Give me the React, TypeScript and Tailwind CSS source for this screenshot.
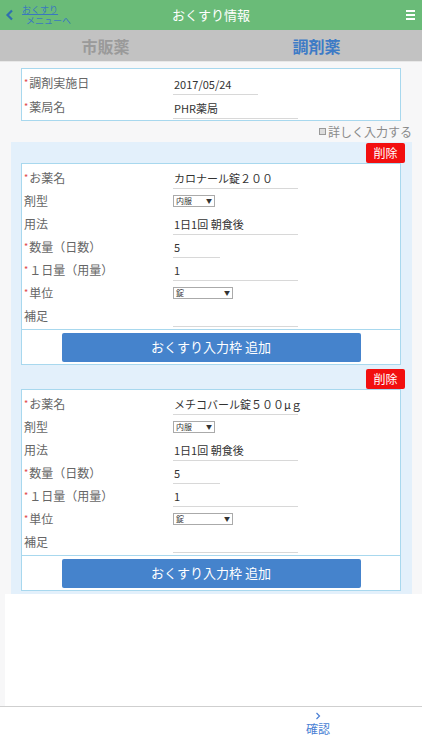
import React from "react";

const font = { fontFamily: '"Noto Sans CJK JP", "Noto Sans", sans-serif' };

function Req() {
  return <span className="text-[#e04848] text-[9px] mr-[1px] relative -top-[2px]">*</span>;
}

function Row({ label, req, children }: { label: string; req?: boolean; children?: React.ReactNode }) {
  return (
    <div className="flex items-center h-[23px]">
      <div className="w-[151px] pl-[2px] text-[12px] text-[#666] leading-none whitespace-nowrap">
        {req && <Req />}
        {label}
      </div>
      <div className="flex-1 h-full flex items-end">{children}</div>
    </div>
  );
}

function Line({ value, w }: { value: string; w: string }) {
  return (
    <div className={`${w} h-[21px] border-b border-[#d8d8d8] text-[11px] text-[#333] leading-[20px] pl-[1px] whitespace-nowrap`}>
      {value}
    </div>
  );
}

function Sel({ value, w }: { value: string; w: string }) {
  return (
    <div className="h-full flex items-center">
      <div className={`${w} h-[12px] border border-[#aaa] bg-white flex items-center justify-between px-[2px] text-[8px] text-[#333] leading-none`}>
        <span>{value}</span>
        <span className="text-[6px]">▼</span>
      </div>
    </div>
  );
}

function Block({ name }: { name: string }) {
  return (
    <div className="ml-[11px] w-[401px] bg-[#e3f0fb] pt-[1px] pb-[3px]">
      <div className="flex justify-end pr-[7px]">
        <div className="w-[39px] h-[20px] bg-[#f20f0f] rounded-[2px] text-white text-[12px] flex items-center justify-center leading-none">
          削除
        </div>
      </div>
      <div className="ml-[10px] w-[380px] bg-white border border-[#a8d8ee]">
        <div className="pt-[2px] pb-[2px]">
          <Row label="お薬名" req>
            <Line value={name} w="w-[125px]" />
          </Row>
          <Row label="剤型">
            <Sel value="内服" w="w-[42px]" />
          </Row>
          <Row label="用法">
            <Line value="1日1回 朝食後" w="w-[125px]" />
          </Row>
          <Row label="数量（日数）" req>
            <Line value="5" w="w-[47px]" />
          </Row>
          <Row label="１日量（用量）" req>
            <Line value="1" w="w-[125px]" />
          </Row>
          <Row label="単位" req>
            <Sel value="錠" w="w-[60px]" />
          </Row>
          <Row label="補足">
            <Line value="" w="w-[125px]" />
          </Row>
        </div>
        <div className="border-t border-[#a8d8ee] h-[35px] flex items-center justify-center">
          <div className="w-[299px] h-[29px] bg-[#4583cc] rounded-[2px] text-white text-[13px] flex items-center justify-center">
            おくすり入力枠 追加
          </div>
        </div>
      </div>
    </div>
  );
}

export default function App() {
  return (
    <div className="w-[422px] h-[750px] bg-[#f7f7f8] flex flex-col overflow-hidden" style={font}>
      {/* header */}
      <div className="h-[30px] bg-[#6abb78] flex items-center relative shrink-0">
        <div className="flex items-center pl-[5px] relative z-10">
          <svg width="9" height="12" viewBox="0 0 9 12" className="mr-[8px]">
            <path d="M7 1.5 L2.5 6 L7 10.5" stroke="#2f6fb0" strokeWidth="2.2" fill="none" />
          </svg>
          <div className="text-[#3a78c0] text-[9px] leading-[11px] -mt-[1px]">
            <div className="underline">おくすり</div>
            <div className="pl-[4px]">メニューへ</div>
          </div>
        </div>
        <div className="absolute left-0 right-0 text-center text-white text-[13px] pointer-events-none">おくすり情報</div>
        <div className="ml-auto pr-[7px] flex flex-col gap-[2px]">
          <div className="w-[9px] h-[2px] bg-white" />
          <div className="w-[9px] h-[2px] bg-white" />
          <div className="w-[9px] h-[2px] bg-white" />
        </div>
      </div>
      {/* tabs */}
      <div className="h-[32px] bg-[#c2c2c2] flex shrink-0 border-b-[1px] border-[#e8e8e8]">
        <div className="w-1/2 flex items-center justify-center text-[16px] font-bold text-[#9a9a9a]">市販薬</div>
        <div className="w-1/2 flex items-center justify-center text-[16px] font-bold text-[#3d7bc6]">調剤薬</div>
      </div>
      <div className="pt-[6px] shrink-0">
        <div className="ml-[21px] w-[380px] bg-white border border-[#a8d8ee] pt-[2px] pb-[1px]">
          <div className="flex items-center h-[24px]">
            <div className="w-[151px] pl-[2px] text-[12px] text-[#666] leading-none">
              <Req />調剤実施日
            </div>
            <div className="flex-1 h-full flex items-end">
              <Line value="2017/05/24" w="w-[85px]" />
            </div>
          </div>
          <div className="flex items-center h-[24px]">
            <div className="w-[151px] pl-[2px] text-[12px] text-[#666] leading-none">
              <Req />薬局名
            </div>
            <div className="flex-1 h-full flex items-end">
              <Line value="PHR薬局" w="w-[125px]" />
            </div>
          </div>
        </div>
        <div className="h-[21px] flex items-center justify-end pr-[10px] text-[12px] text-[#8a8a8a]">
          <span className="w-[7px] h-[7px] border border-[#999] bg-[#ddd] mr-[2px] inline-block" />
          詳しく入力する
        </div>
        <Block name="カロナール錠２００" />
        <Block name="メチコバール錠５００μｇ" />
      </div>
      <div className="ml-[5px] bg-white h-[112px] shrink-0" />
      <div className="border-t border-[#cfcfcf] bg-white flex-1 relative">
        <div className="absolute left-[305px] top-[5px] w-[26px] flex flex-col items-center text-[#4a7fd4] leading-none">
          <svg width="6" height="8" viewBox="0 0 6 8">
            <path d="M1.5 1 L4.5 4 L1.5 7" stroke="#4a7fd4" strokeWidth="1.2" fill="none" />
          </svg>
          <span className="text-[12px] mt-[3px]">確認</span>
        </div>
      </div>
    </div>
  );
}
